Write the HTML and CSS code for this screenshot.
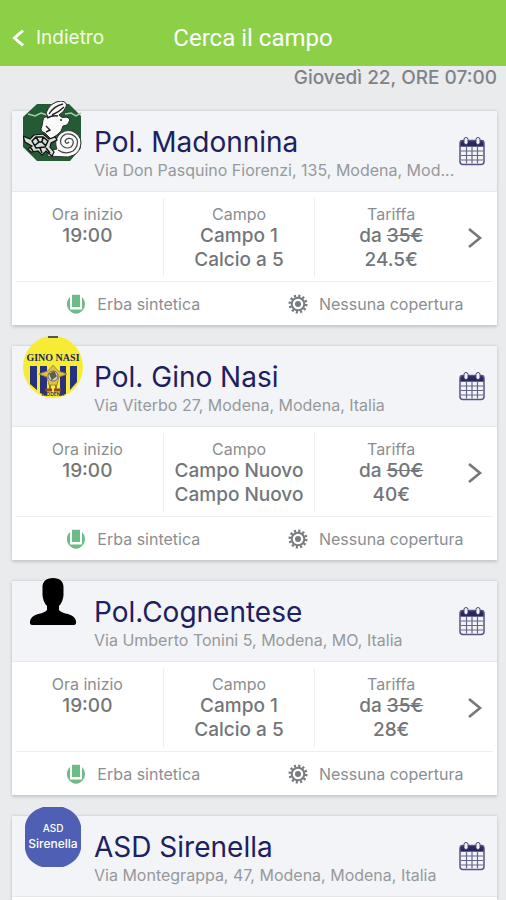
FILE: index.html
```html
<!DOCTYPE html>
<html lang="it">

<head>
    <meta charset="UTF-8">
    <meta name="viewport" content="width=device-width, initial-scale=1.0">
    <title>Cerca il campo</title>
    <link rel="stylesheet" href="styles.css">
</head>

<body>
    <!-- Shared icons -->
    <svg class="sprite" aria-hidden="true">
        <symbol id="calendar" viewBox="0 0 26 29">
            <path d="M1 5.500Q1 3.500 3 3.500H23Q25 3.500 25 5.500V10H1Z" fill="#28285f" />
            <rect x="1" y="4" width="24" height="24" rx="3" fill="none" stroke="#55557f" stroke-width="1.500" />
            <path d="M2 10H24M2 14.500H24M2 19H24M2 23.500H24M7.500 10V27M13 10V27M18.500 10V27" stroke="#66668c" stroke-width="1.200" />
            <rect x="5" y="1" width="4" height="7" rx="2" fill="#f2f4f7" stroke="#45456f" />
            <rect x="17" y="1" width="4" height="7" rx="2" fill="#f2f4f7" stroke="#45456f" />
        </symbol>
        <symbol id="chevron" viewBox="0 0 14 20">
            <path d="M1 1L12 10L1 19" fill="none" stroke="#75787b" stroke-width="2.600" />
        </symbol>
        <symbol id="grass" viewBox="0 0 20 20">
            <path d="M4 3A9.500 9.500 0 0 0 4 17ZM16 3A9.500 9.500 0 0 1 16 17Z" fill="#6dbb87" />
            <path d="M6 0.800H14V13H6ZM3 15.500H17Q14 19.800 10 19.800T3 15.500Z" fill="#6dbb87" />
        </symbol>
        <symbol id="gear" viewBox="0 0 20 20">
            <circle cx="10" cy="10" r="8.200" fill="none" stroke="#777c80" stroke-width="2.600" stroke-dasharray="2.147 2.147" />
            <circle cx="10" cy="10" r="6.300" fill="none" stroke="#777c80" stroke-width="2" />
            <circle cx="10" cy="10" r="3" fill="#777c80" />
        </symbol>
    </svg>

    <header class="topbar">
        <a href="#" class="back">
            <svg class="back-icon" viewBox="0 0 12 18">
                <path d="M11 1.500L2.500 9L11 16.500" fill="none" stroke="#fff" stroke-width="3" />
            </svg>
            Indietro
        </a>
        <h1>Cerca il campo</h1>
    </header>

    <main class="results">
        <p class="date">Giovedì 22, ORE 07:00</p>

        <section class="card">
            <div class="card-header">
                <svg class="logo" viewBox="0 0 60 62">
                    <path d="M14 3H46L58 15V47L47 60H14L0 46V16Z" fill="#245b34" />
                    <path d="M5 13L12 15L18 12L24 14M42 13L48 12L53 15L58 12" fill="none" stroke="#a9c8ae" stroke-width="1.500" />
                    <!-- Rabbit -->
                    <path d="M20 19Q21 15 25 16L23 12Q27 1 38 0Q45 1 43 6Q41 11 36 14Q39 18 43 16Q48 17 46 21Q45 25 40 25Q39 31 34 34L28 38L22 32Q16 30 19 25Z" fill="#f8f9f8" stroke="#222" />
                    <path d="M26 13Q31 5 40 3M29 14Q36 11 41 6M24 17Q30 14 35 15M23 25L27 29L23 31M37 19H39" fill="none" stroke="#222" stroke-width="1.400" />
                    <!-- Snail -->
                    <path d="M24 55Q27 49 34 48Q31 41 35 35Q41 28 49 30Q58 34 58 42Q57 51 51 54L45 56Z" fill="#f8f9f8" stroke="#333" />
                    <path d="M35 49Q42 54 50 50Q56 45 54 38Q50 32 43 33Q36 36 38 43Q42 49 48 46Q52 42 49 38Q44 36 42 40Q43 44 46 41" fill="none" stroke="#444" stroke-width="1.200" />
                    <!-- Turtle -->
                    <path d="M0 35L7 38L11 34L20 33L26 38L32 36L34 39L28 42L27 46L31 51L29 55L23 50L19 54L15 50L8 51L5 48L9 45L2 41Z" fill="#d6ddd4" stroke="#111" stroke-width="1.200" />
                    <path d="M9 40L13 36H20L25 40L22 46L13 47ZM13 36L16 41L11 45M20 36L19 41L23 45M16 41H19M7 46L10 50M17 47L19 52M23 47L27 52" fill="none" stroke="#111" stroke-width="1.500" />
                </svg>
                <div class="club">
                    <h2>Pol. Madonnina</h2>
                    <p>Via Don Pasquino Fiorenzi, 135, Modena, Mod...</p>
                </div>
                <button type="button" class="calendar" aria-label="Calendario"><svg><use href="#calendar" /></svg></button>
            </div>
            <div class="slot">
                <div class="slot-col">
                    <span>Ora inizio</span>
                    <strong>19:00</strong>
                </div>
                <div class="slot-col">
                    <span>Campo</span>
                    <strong>Campo 1</strong>
                    <strong>Calcio a 5</strong>
                </div>
                <div class="slot-col">
                    <span>Tariffa</span>
                    <strong>da <del>35€</del></strong>
                    <strong>24.5€</strong>
                </div>
                <a href="#" class="next" aria-label="Apri"><svg><use href="#chevron" /></svg></a>
            </div>
            <div class="features">
                <div class="feature"><svg><use href="#grass" /></svg>Erba sintetica</div>
                <div class="feature"><svg><use href="#gear" /></svg>Nessuna copertura</div>
            </div>
        </section>

        <section class="card">
            <div class="card-header">
                <svg class="logo" viewBox="0 0 60 62">
                    <ellipse cx="30" cy="31" rx="30" ry="31" fill="#f7ec35" />
                    <path d="M7 30H14V54L7 48ZM17 30H24V60L17 57ZM37 30H43V58L37 60ZM47 30H54V46L47 54Z" fill="#27317e" />
                    <path d="M25 1H35" stroke="#555" stroke-width="2" />
                    <text x="30" y="25" class="logo-gino" text-anchor="middle">GINO NASI</text>
                    <path d="M16 38L25 35L30 29L35 35L44 38L36 41L34 49H26L24 41Z" fill="#e7bf3d" stroke="#a28d3a" />
                    <circle cx="30" cy="40" r="5" fill="#cfdbe3" stroke="#56697a" />
                    <path d="M27 38L31 36L33 40L29 43ZM27 49V53M33 49V53" fill="#4c6072" stroke="#6d5b28" stroke-width="1.500" />
                    <path d="M22 54H29M31 54H38" stroke="#9b4221" stroke-width="3" />
                    <text x="30" y="60" class="logo-town" text-anchor="middle">MODENA</text>
                </svg>
                <div class="club">
                    <h2>Pol. Gino Nasi</h2>
                    <p>Via Viterbo 27, Modena, Modena, Italia</p>
                </div>
                <button type="button" class="calendar" aria-label="Calendario"><svg><use href="#calendar" /></svg></button>
            </div>
            <div class="slot">
                <div class="slot-col">
                    <span>Ora inizio</span>
                    <strong>19:00</strong>
                </div>
                <div class="slot-col">
                    <span>Campo</span>
                    <strong>Campo Nuovo</strong>
                    <strong>Campo Nuovo</strong>
                </div>
                <div class="slot-col">
                    <span>Tariffa</span>
                    <strong>da <del>50€</del></strong>
                    <strong>40€</strong>
                </div>
                <a href="#" class="next" aria-label="Apri"><svg><use href="#chevron" /></svg></a>
            </div>
            <div class="features">
                <div class="feature"><svg><use href="#grass" /></svg>Erba sintetica</div>
                <div class="feature"><svg><use href="#gear" /></svg>Nessuna copertura</div>
            </div>
        </section>

        <section class="card">
            <div class="card-header">
                <svg class="logo" viewBox="0 0 60 62">
                    <path d="M30 7C37 7 41 11 40.500 17V24Q40 31 36 35V39Q39 42 45 43Q52 45 53 50V52Q53 54 50 54H10Q7 54 7 52V50Q8 45 15 43Q21 42 24 39V35Q20 31 19.500 24V17C19 11 23 7 30 7Z" fill="#000" />
                </svg>
                <div class="club">
                    <h2>Pol.Cognentese</h2>
                    <p>Via Umberto Tonini 5, Modena, MO, Italia</p>
                </div>
                <button type="button" class="calendar" aria-label="Calendario"><svg><use href="#calendar" /></svg></button>
            </div>
            <div class="slot">
                <div class="slot-col">
                    <span>Ora inizio</span>
                    <strong>19:00</strong>
                </div>
                <div class="slot-col">
                    <span>Campo</span>
                    <strong>Campo 1</strong>
                    <strong>Calcio a 5</strong>
                </div>
                <div class="slot-col">
                    <span>Tariffa</span>
                    <strong>da <del>35€</del></strong>
                    <strong>28€</strong>
                </div>
                <a href="#" class="next" aria-label="Apri"><svg><use href="#chevron" /></svg></a>
            </div>
            <div class="features">
                <div class="feature"><svg><use href="#grass" /></svg>Erba sintetica</div>
                <div class="feature"><svg><use href="#gear" /></svg>Nessuna copertura</div>
            </div>
        </section>

        <section class="card">
            <div class="card-header">
                <svg class="logo" viewBox="0 0 60 62">
                    <path d="M20 1H40Q55 6 58 20V43Q55 56 40 61H19Q4 56 2 43V20Q4 6 20 1Z" fill="#4f5fb3" />
                    <text x="30" y="26" class="logo-asd" text-anchor="middle">ASD</text>
                    <text x="30" y="42" class="logo-name" text-anchor="middle">Sirenella</text>
                </svg>
                <div class="club">
                    <h2>ASD Sirenella</h2>
                    <p>Via Montegrappa, 47, Modena, Modena, Italia</p>
                </div>
                <button type="button" class="calendar" aria-label="Calendario"><svg><use href="#calendar" /></svg></button>
            </div>
            <div class="slot"></div>
        </section>
    </main>
</body>

</html>
```
FILE: styles.css
```css
* {
    box-sizing: border-box;
}

body {
    display: flex;
    flex-direction: column;
    height: 100vh;
    margin: 0;
    background-color: #e9ebed;
    color: #8b8e91;
    font-family: Inter, "Liberation Sans", sans-serif;
    font-size: 16px;
    line-height: 20px;
}

h1, h2, p {
    margin: 0;
    font-weight: 400;
}

.sprite {
    display: none;
}

/* Green bar */
.topbar {
    display: grid;
    grid-template-columns: 1fr auto 1fr;
    align-items: center;
    flex: none;
    height: 66px;
    padding: 10px 12px 0;
    background-color: #8cd047;
    color: #fff;
}

.topbar h1 {
    font-family: Roboto, "Liberation Sans", sans-serif;
    font-size: 24px;
    line-height: 32px;
}

.back {
    display: flex;
    align-items: center;
    gap: 12px;
    color: #f5fbe9;
    font-size: 19px;
    text-decoration: none;
}

.back-icon {
    width: 12px;
    height: 18px;
}

/* Results */
.results {
    flex: 1;
    min-height: 0;
    overflow-y: auto;
    scrollbar-width: none;
    padding: 0 9px 0 12px;
}

.date {
    height: 45px;
    padding-top: 2px;
    color: #808386;
    font-size: 19px;
    font-weight: 500;
    text-align: right;
}

.card {
    margin-bottom: 21px;
    background-color: #fff;
    box-shadow: 0 2px 3px #c3c6c9, 0 -1px 2px #d5d8da;
}

.card-header {
    position: relative;
    display: flex;
    align-items: center;
    height: 81px;
    padding: 0 12px 0 82px;
    background-color: #f2f4f7;
    border-bottom: 1px solid #e6e8eb;
}

.logo {
    position: absolute; /* Sticks out over the top of the card */
    top: -10px;
    left: 11px;
    width: 60px;
    height: 62px;
}

.logo-gino {
    fill: #20265c;
    font-family: "Liberation Serif", serif;
    font-size: 10px;
    font-weight: 700;
}

.logo-town {
    fill: #3b3e4a;
    font-size: 5px;
    font-weight: 700;
}

.logo-asd, .logo-name {
    fill: #fff;
    font-size: 10px;
    font-weight: 500;
}

.logo-name {
    font-size: 12px;
}

.club {
    flex: 1;
    min-width: 0;
    padding-top: 4px;
}

.club h2 {
    color: #20205f;
    font-size: 28px;
    line-height: 34px;
}

.club p {
    overflow: hidden;
    text-overflow: ellipsis;
    white-space: nowrap;
    color: #97999c;
    line-height: 22px;
}

.calendar {
    flex: none;
    width: 26px;
    height: 30px;
    padding: 0;
    border: none;
    background: none;
    cursor: pointer;
}

.calendar svg {
    display: block;
    width: 26px;
    height: 30px;
}

.slot {
    display: grid;
    grid-template-columns: 1fr 1fr 1fr 30px;
    height: 89px;
    padding: 6px 0 4px;
}

.slot-col {
    display: flex;
    flex-direction: column;
    align-items: center;
    padding-top: 6px;
    border-right: 1px solid #edeff0;
}

.slot-col:nth-child(3) {
    border-right: none;
}

.slot-col strong {
    color: #737679;
    font-size: 19px;
    font-weight: 500;
    line-height: 24px;
}

.next {
    display: flex;
    align-items: center;
}

.next svg {
    width: 16px;
    height: 20px;
}

.features {
    display: grid;
    grid-template-columns: 1fr 1fr;
    column-gap: 8px;
    height: 44px;
    margin: 0 4px;
    border-top: 1px solid #edeff0;
}

.feature {
    display: flex;
    align-items: center;
    justify-content: center;
    gap: 11px;
}

.feature svg {
    width: 20px;
    height: 20px;
}
```
